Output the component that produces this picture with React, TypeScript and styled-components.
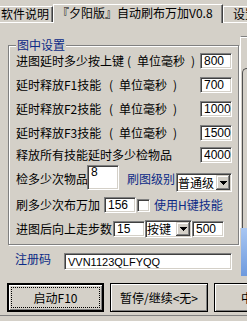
import styled, { createGlobalStyle } from "styled-components";

const FACE = "#d4d0c8";
const BLUE = "#0b2a86";

const GlobalStyle = createGlobalStyle`
  * { box-sizing: border-box; }
  html, body { margin: 0; padding: 0; background: ${FACE}; }
  body {
    font-family: "Noto Sans CJK SC", "Liberation Sans", sans-serif;
    font-size: 12px;
    line-height: 12px;
    color: #000;
    overflow: hidden;
  }
`;

const Window = styled.div`
  width: 247px;
  height: 321px;
  overflow: hidden;
  background: ${FACE};
`;

const TabStrip = styled.div`
  display: flex;
  align-items: flex-end;
  height: 23px;
  border-bottom: 1px solid #fff;
`;

const Tab = styled.div<{ $active?: boolean; $w?: number; $pl?: number; $ml?: number }>`
  flex: none;
  position: relative;
  z-index: ${(p) => (p.$active ? 1 : 0)};
  width: ${(p) => (p.$w ? `${p.$w}px` : "auto")};
  height: ${(p) => (p.$active ? 19 : 16)}px;
  margin: 0 0 ${(p) => (p.$active ? -1 : 0)}px ${(p) => p.$ml ?? 0}px;
  padding: ${(p) => (p.$active ? 2 : 1)}px 6px 0 ${(p) => p.$pl ?? 6}px;
  background: ${FACE};
  border-top: 1px solid #fff;
  border-left: 1px solid #fff;
  border-right: 1px solid #404040;
  box-shadow: inset -1px 0 #808080;
  white-space: nowrap;
  text-align: ${(p) => (p.$pl === undefined ? "center" : "left")};
`;

const Panel = styled.div`
  height: 293px;
  border-bottom: 1px solid #808080;
  overflow: hidden;
`;

const TopArea = styled.div`
  display: flex;
  align-items: flex-start;
`;

const MainColumn = styled.div`
  flex: none;
  width: 240px;
  padding-top: 22px;
`;

const GroupBox = styled.div`
  position: relative;
  margin-left: 8px;
  width: 231px;
  padding: 3px 6px 3px 7px;
  border: 1px solid #808080;
  box-shadow: inset 1px 1px #fff, 1px 1px #fff;
`;

const Legend = styled.span`
  position: absolute;
  top: -7px;
  left: 7px;
  padding: 0 1px;
  background: ${FACE};
  color: ${BLUE};
`;

const Row = styled.div<{ $h: number }>`
  display: flex;
  align-items: center;
  height: ${(p) => p.$h}px;
`;

const Text = styled.span<{ $w?: number; $blue?: boolean; $ml?: number }>`
  flex: none;
  width: ${(p) => (p.$w ? `${p.$w}px` : "auto")};
  margin-left: ${(p) => p.$ml ?? 0}px;
  color: ${(p) => (p.$blue ? BLUE : "#000")};
  white-space: pre;
`;

const sunken = `
  border: 1px solid;
  border-color: #808080 #fff #fff #808080;
  box-shadow: inset 1px 1px #404040, inset -1px -1px ${FACE};
  background: #fff;
`;

const EditBox = styled.input<{ $w: number; $h?: number; $ml?: number; $push?: boolean; $fs?: number }>`
  flex: none;
  width: ${(p) => p.$w}px;
  height: ${(p) => p.$h ?? 16}px;
  margin: 0 0 0 ${(p) => (p.$push ? "auto" : `${p.$ml ?? 0}px`)};
  padding: 0 0 0 3px;
  ${sunken}
  font-family: "Liberation Sans", Arial, sans-serif;
  font-size: ${(p) => p.$fs ?? 12}px;
  color: #000;
  outline: none;
`;

const MemoBox = styled.textarea`
  flex: none;
  align-self: flex-start;
  width: 32px;
  height: 25px;
  margin: 0;
  padding: 0 0 0 3px;
  ${sunken}
  font-family: "Liberation Sans", Arial, sans-serif;
  font-size: 12px;
  line-height: 12px;
  resize: none;
  overflow: hidden;
  outline: none;
`;

const Combo = styled.div<{ $w: number; $h: number; $ml?: number; $low?: boolean }>`
  flex: none;
  display: flex;
  width: ${(p) => p.$w}px;
  height: ${(p) => p.$h}px;
  margin-left: ${(p) => p.$ml ?? 0}px;
  align-self: ${(p) => (p.$low ? "flex-end" : "center")};
  margin-bottom: ${(p) => (p.$low ? 1 : 0)}px;
  padding: 1px;
  ${sunken}
`;

const ComboText = styled.span`
  flex: 1;
  align-self: center;
  white-space: nowrap;
`;

const DropButton = styled.span`
  flex: none;
  width: 14px;
  display: flex;
  align-items: center;
  justify-content: center;
  background: ${FACE};
  box-shadow: inset -1px -1px #404040, inset 1px 1px ${FACE}, inset -2px -2px #808080, inset 2px 2px #fff;
`;

const CheckBox = styled.span<{ $ml?: number }>`
  flex: none;
  width: 13px;
  height: 13px;
  margin-left: ${(p) => p.$ml ?? 0}px;
  ${sunken}
`;

const RegRow = styled.div`
  display: flex;
  align-items: flex-start;
  height: 17px;
  margin-top: 8px;
  padding-left: 15px;
`;

const SidePane = styled.div`
  flex: none;
  width: 60px;
  margin-top: 13px;
`;

const SideFrame = styled.div`
  display: flex;
  height: 192px;
  padding: 31px 0 0 1px;
  border-top: 1px solid #808080;
  border-left: 1px solid #fff;
  box-shadow: inset 0 1px #fff;
`;

const SideCard = styled.div`
  flex: 1;
  border-top: 1px solid #505050;
  border-left: 1px solid #505050;
  border-top-left-radius: 5px;
`;

const SideImage = styled.div`
  height: 48px;
  margin-left: 1px;
  background: linear-gradient(to bottom, #a8c6f2, #6e9ade);
`;

const ButtonRow = styled.div`
  display: flex;
  gap: 6px;
  margin-top: 7px;
  padding-left: 7px;
`;

const Button = styled.button<{ $w: number; $default?: boolean }>`
  flex: none;
  display: flex;
  width: ${(p) => p.$w}px;
  height: 29px;
  padding: 2px;
  background: ${FACE};
  border: ${(p) => (p.$default ? 2 : 1)}px solid #000;
  box-shadow: inset 1px 1px #fff, inset -1px -1px #808080;
  font-family: "Noto Sans CJK SC", "Liberation Sans", sans-serif;
  font-size: 12px;
  line-height: 12px;
  color: #000;
`;

const Caption = styled.span<{ $focus?: boolean }>`
  flex: 1;
  display: flex;
  align-items: center;
  justify-content: center;
  white-space: nowrap;
  border: 1px dotted ${(p) => (p.$focus ? "#000" : "transparent")};
`;

function DownArrow() {
  return (
    <svg width="7" height="4" viewBox="0 0 7 4" shapeRendering="crispEdges">
      <path d="M0 0h7v1h-1v1h-1v1h-1v1h-1v-1h-1v-1h-1v-1h-1z" fill="#000" />
    </svg>
  );
}

const delays = [
  { label: "进图延时多少按上键", w: 111, unit: true, value: "800", h: 24 },
  { label: "延时释放F1技能", w: 93, unit: true, value: "700", h: 24 },
  { label: "延时释放F2技能", w: 93, unit: true, value: "1000", h: 24 },
  { label: "延时释放F3技能", w: 93, unit: true, value: "1500", h: 24 },
  { label: "释放所有技能延时多少检物品", w: 0, unit: false, value: "4000", h: 20 },
];

export default function App() {
  return (
    <Window>
      <GlobalStyle />
      <TabStrip>
        <Tab $w={59} $ml={-6}>软件说明</Tab>
        <Tab $active $w={170} $pl={3}>
          『夕阳版』自动刷布万加V0.8
        </Tab>
        <Tab $pl={9}>设置参数</Tab>
      </TabStrip>
      <Panel>
        <TopArea>
          <MainColumn>
            <GroupBox>
              <Legend>图中设置</Legend>
              {delays.map((d) => (
                <Row key={d.label} $h={d.h}>
                  <Text $w={d.w || undefined}>{d.label}</Text>
                  {d.unit && <Text>{"(\u2002单位毫秒\u2002)"}</Text>}
                  <EditBox $w={32} $push readOnly value={d.value} />
                </Row>
              ))}
              <Row $h={28}>
                <Text $w={71}>检多少次物品</Text>
                <MemoBox readOnly value="8" />
                <Text $blue $ml={8}>刷图级别</Text>
                <Combo $w={56} $h={19} $ml={1} $low>
                  <ComboText>普通级</ComboText>
                  <DropButton>
                    <DownArrow />
                  </DropButton>
                </Combo>
              </Row>
              <Row $h={24}>
                <Text $w={84}>刷多少次布万加</Text>
                <EditBox $w={32} $ml={4} readOnly value="156" />
                <CheckBox $ml={1} />
                <Text $blue $ml={4}>使用H键技能</Text>
              </Row>
              <Row $h={24}>
                <Text $w={96}>进图后向上走步数</Text>
                <EditBox $w={32} $ml={1} readOnly value="15" />
                <Combo $w={47} $h={18}>
                  <ComboText>按键</ComboText>
                  <DropButton>
                    <DownArrow />
                  </DropButton>
                </Combo>
                <EditBox $w={32} readOnly value="500" />
              </Row>
            </GroupBox>
            <RegRow>
              <Text $w={49} $blue>注册码</Text>
              <EditBox $w={168} $h={17} $fs={11} readOnly value="VVN1123QLFYQQ" />
            </RegRow>
          </MainColumn>
          <SidePane>
            <SideFrame>
              <SideCard />
            </SideFrame>
            <SideImage />
          </SidePane>
        </TopArea>
        <ButtonRow>
          <Button $w={97} $default>
            <Caption $focus>启动F10</Caption>
          </Button>
          <Button $w={98}>
            <Caption>暂停/继续&lt;无&gt;</Caption>
          </Button>
          <Button $w={98}>
            <Caption>中止F11</Caption>
          </Button>
        </ButtonRow>
      </Panel>
    </Window>
  );
}
